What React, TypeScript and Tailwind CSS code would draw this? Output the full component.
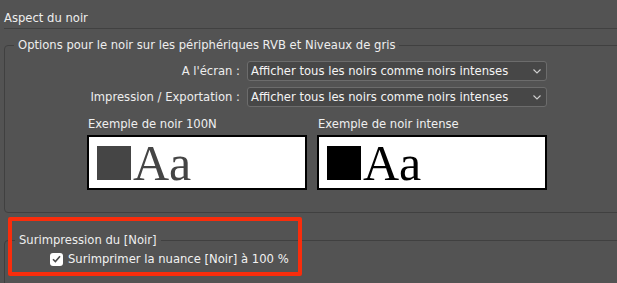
import React from "react";

function Chevron() {
  return (
    <svg width="8" height="5" viewBox="0 0 8 5" className="shrink-0">
      <path d="M0.5 0.5 L4 4 L7.5 0.5" fill="none" stroke="#d0d0d0" strokeWidth="1.1" />
    </svg>
  );
}

function Select({ value }: { value: string }) {
  return (
    <div className="w-[300px] h-[20px] rounded-[3px] border border-[#6c6c6c] bg-[#474747] flex items-center pl-[3px] pr-[5px]">
      <span className="flex-1 text-[#f4f4f4] leading-[14px]">{value}</span>
      <Chevron />
    </div>
  );
}

function Sample({ label, color, width }: { label: string; color: string; width: string }) {
  return (
    <div className={`flex flex-col ${width}`}>
      <div className="leading-[14px] pl-[1px] text-[#f0f0f0]">{label}</div>
      <div className="mt-[4px] h-[55px] border-2 border-black bg-white flex items-center pl-[8px]">
        <div className="w-[34px] h-[34px]" style={{ backgroundColor: color }} />
        <span
          className="ml-[2px] text-[50px] leading-none"
          style={{ fontFamily: '"Liberation Serif", "Times New Roman", serif', color }}
        >
          Aa
        </span>
      </div>
    </div>
  );
}

export default function App() {
  return (
    <div
      className="relative w-[617px] h-[283px] overflow-hidden bg-[#535353] text-[11.6px] text-[#eeeeee]"
      style={{ fontFamily: '"DejaVu Sans", Verdana, sans-serif' }}
    >
      <div className="ml-[4px] pt-[11px] pb-[3px] border-b border-[#414141] leading-[14px]">
        Aspect du noir
      </div>

      <fieldset className="ml-[4px] mt-[9px] w-[650px] border border-[#404040] rounded-[4px] pl-[9px] pb-[22px]">
        <legend className="px-[4px] leading-[14px]">
          Options pour le noir sur les périphériques RVB et Niveaux de gris
        </legend>
        <div className="mt-[9px] flex flex-col gap-[6px]">
          <div className="flex items-center gap-[7px]">
            <div className="w-[226px] text-right leading-[14px]">A l'écran :</div>
            <Select value="Afficher tous les noirs comme noirs intenses" />
          </div>
          <div className="flex items-center gap-[7px]">
            <div className="w-[226px] text-right leading-[14px]">Impression / Exportation :</div>
            <Select value="Afficher tous les noirs comme noirs intenses" />
          </div>
        </div>
        <div className="mt-[10px] ml-[73px] flex gap-[10px]">
          <Sample label="Exemple de noir 100N" color="#454545" width="w-[220px]" />
          <Sample label="Exemple de noir intense" color="#000000" width="w-[230px]" />
        </div>
      </fieldset>

      <fieldset className="ml-[4px] mt-[20px] w-[650px] h-[80px] border border-[#404040] rounded-[4px] pl-[10px]">
        <legend className="px-[4px] leading-[14px]">Surimpression du [Noir]</legend>
        <div className="mt-[5px] ml-[35px] flex items-center gap-[5px]">
          <div className="w-[13px] h-[13px] rounded-[3px] bg-white flex items-center justify-center">
            <svg width="9" height="8" viewBox="0 0 9 8">
              <path d="M1 4.2 L3.4 6.6 L8 1.2" fill="none" stroke="#4a4a4a" strokeWidth="1.6" />
            </svg>
          </div>
          <span className="leading-[14px] text-[#f2f2f2]">Surimprimer la nuance [Noir] à 100 %</span>
        </div>
      </fieldset>

      <div className="absolute left-[8px] top-[217px] w-[294px] h-[59px] border-4 border-[#f92d0c] rounded-[2px]" />
    </div>
  );
}
